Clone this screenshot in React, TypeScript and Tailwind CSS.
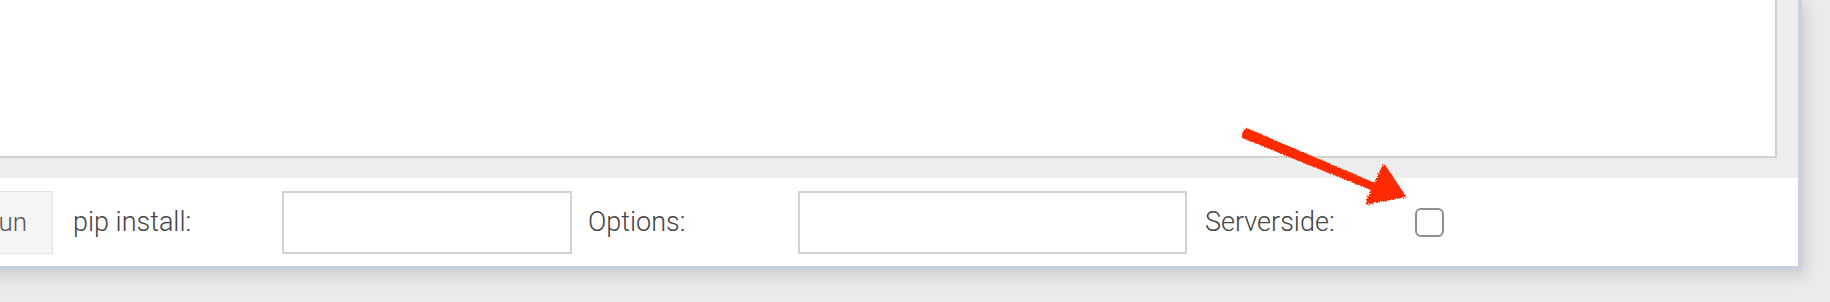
import React from "react";

const font = { fontFamily: "Roboto, 'Helvetica Neue', 'Liberation Sans', sans-serif" };

function Arrow() {
  return (
    <svg
      className="pointer-events-none absolute left-0 top-0"
      width="1830"
      height="302"
      viewBox="0 0 1830 302"
    >
      <defs>
        <filter id="rough" x="-10%" y="-10%" width="120%" height="120%">
          <feTurbulence type="fractalNoise" baseFrequency="0.9" numOctaves="2" seed="3" />
          <feDisplacementMap in="SourceGraphic" scale="4" />
        </filter>
      </defs>
      <g filter="url(#rough)" fill="#ff2a06" stroke="#ff2a06" strokeLinecap="round" strokeLinejoin="round">
        <path d="M1244 131 L1248 130 L1374 184 L1372 189 L1243 137 Z" strokeWidth="2.5" />
        <path d="M1384 166 L1404 196 L1367 203 L1374 186 Z" strokeWidth="3" />
      </g>
    </svg>
  );
}

export default function App() {
  return (
    <div className="relative h-[302px] w-[1830px] overflow-hidden bg-[#ebebeb] text-[#444]" style={font}>
      <div className="ml-[-40px] w-[1842px] border-b-4 border-r-4 border-[#c9d1dc] shadow-[4px_6px_14px_rgba(0,0,0,0.13)]">
        <div className="bg-[#ededed] pb-[20px] pr-[21px]">
          <div className="-mt-[2px] h-[160px] border-2 border-[#d2d2d2] bg-white" />
        </div>
        <div className="flex h-[88px] items-center bg-white">
          <button
            type="button"
            className="h-[63px] w-[93px] border border-[#e2e2e2] bg-[#f5f5f5] pr-[25px] text-right text-[26px] font-light text-[#555]"
          >
            Run
          </button>
          <span className="ml-[20px] w-[209px] text-[27px] font-light">pip install:</span>
          <input className="h-[63px] w-[290px] border-2 border-[#d2d2d2] bg-white outline-none" />
          <span className="ml-[16px] w-[210px] text-[27px] font-light">Options:</span>
          <input className="h-[63px] w-[389px] border-2 border-[#d2d2d2] bg-white outline-none" />
          <span className="ml-[18px] w-[210px] text-[27px] font-light">Serverside:</span>
          <span className="block h-[29px] w-[29px] rounded-[6px] border-2 border-[#8f8f8f] bg-white" />
        </div>
      </div>
      <Arrow />
    </div>
  );
}
